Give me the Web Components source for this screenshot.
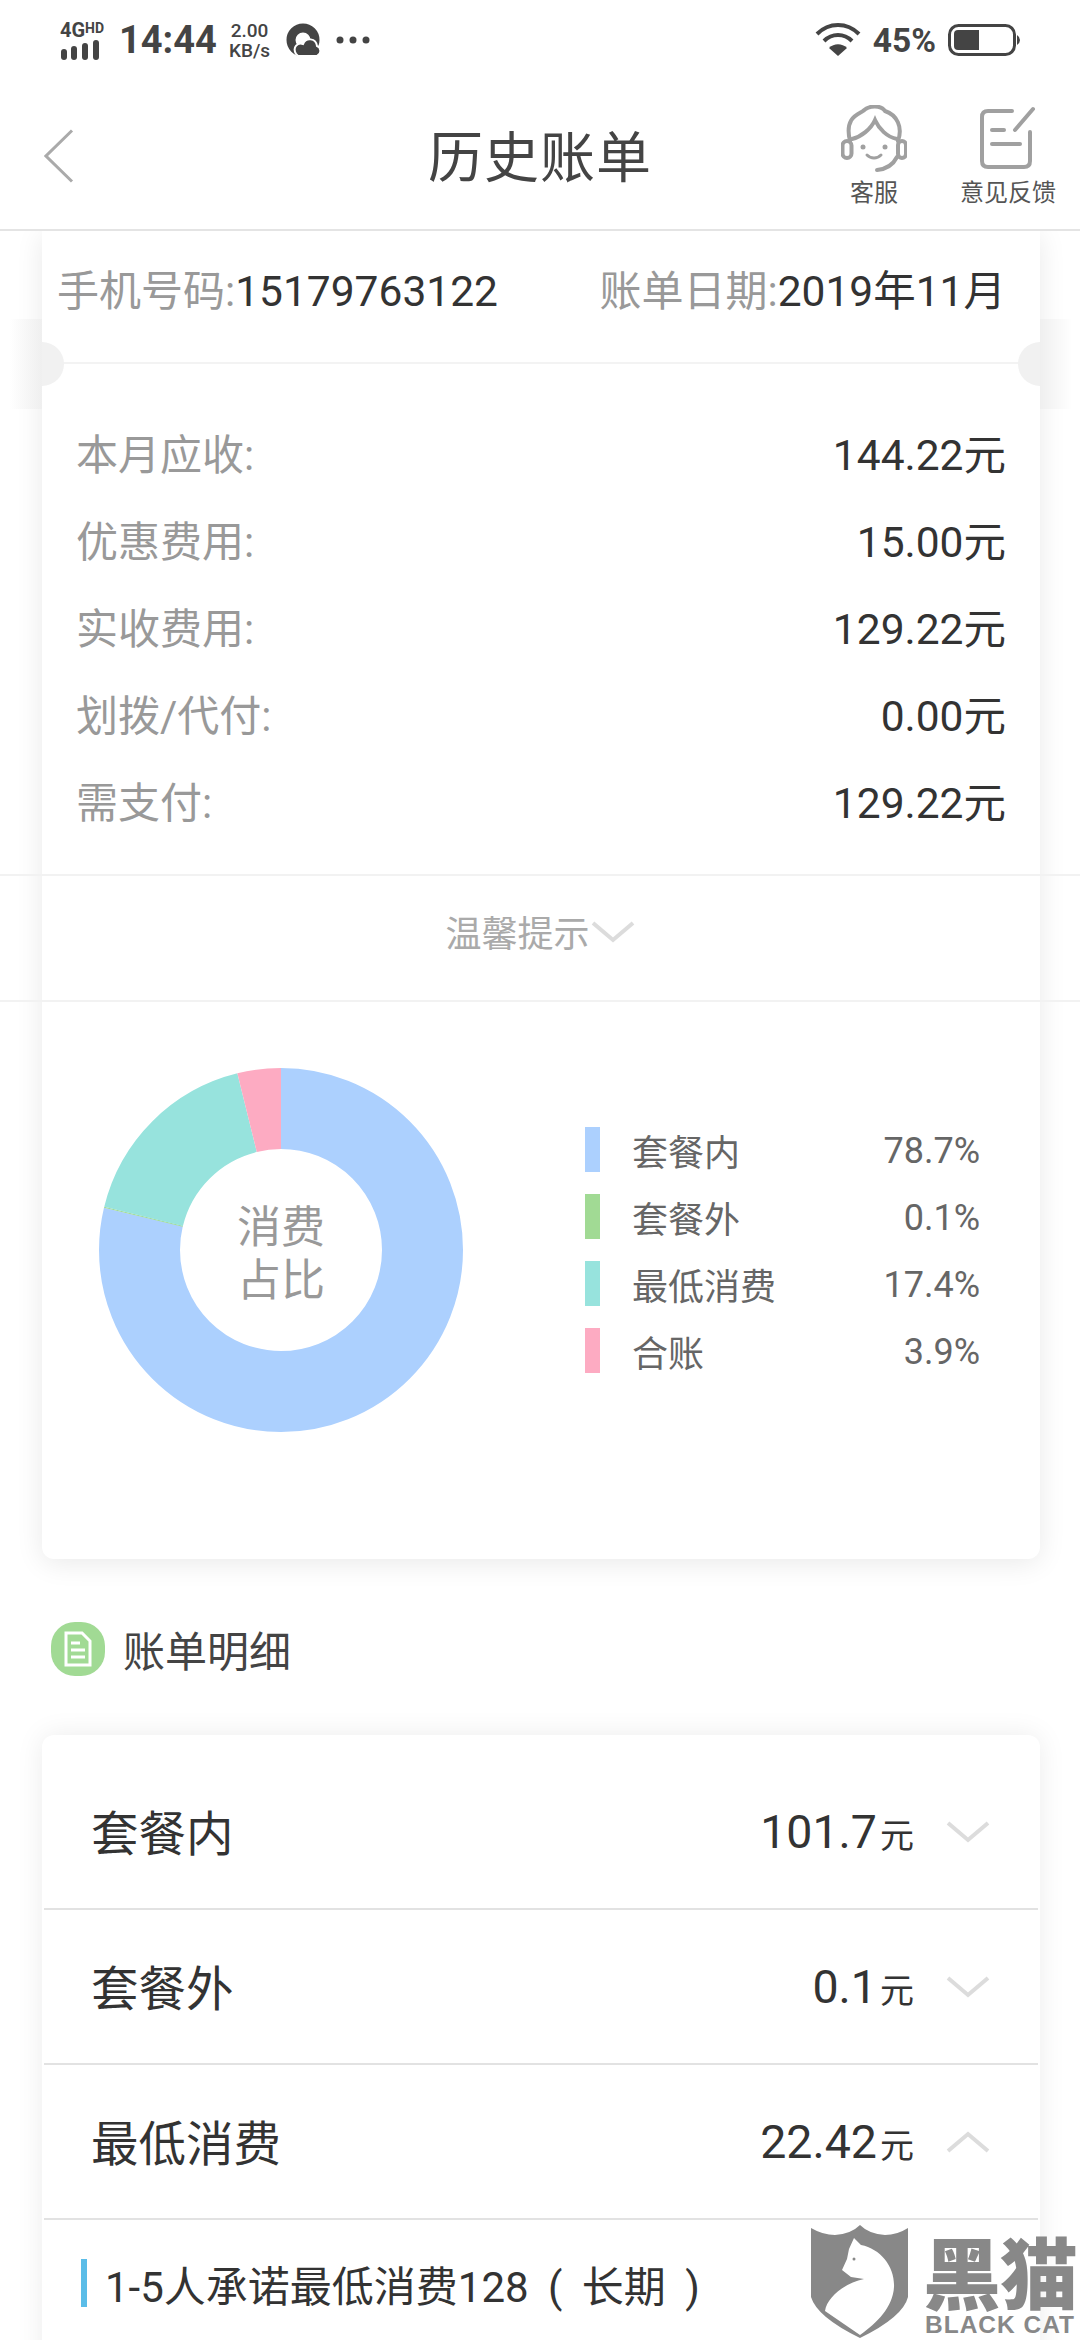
<!DOCTYPE html>
<html lang="zh">
<head>
<meta charset="utf-8">
<title>历史账单</title>
<style>
  html, body { margin: 0; background: #fff; }
  body {
    width: 1080px;
    height: 2340px;
    overflow: hidden;
    position: relative;
    font-family: Roboto, "Noto Sans CJK SC", sans-serif;
  }
</style>
</head>
<body>
<status-bar></status-bar>
<nav-bar heading="历史账单"></nav-bar>

<bill-summary phone="15179763122" date="2019年11月">
  <fee-row label="本月应收:" value="144.22元"></fee-row>
  <fee-row label="优惠费用:" value="15.00元"></fee-row>
  <fee-row label="实收费用:" value="129.22元"></fee-row>
  <fee-row label="划拨/代付:" value="0.00元"></fee-row>
  <fee-row label="需支付:" value="129.22元"></fee-row>
  <donut-chart slot="chart">
    <legend-item color="#acd0fe" label="套餐内" value="78.7%"></legend-item>
    <legend-item color="#a1da94" label="套餐外" value="0.1%"></legend-item>
    <legend-item color="#97e3dd" label="最低消费" value="17.4%"></legend-item>
    <legend-item color="#fdabc2" label="合账" value="3.9%"></legend-item>
  </donut-chart>
</bill-summary>

<section-title>账单明细</section-title>

<detail-card>
  <bill-row label="套餐内" amount="101.7"></bill-row>
  <bill-row label="套餐外" amount="0.1"></bill-row>
  <bill-row label="最低消费" amount="22.42" open></bill-row>
  <detail-line>1-5人承诺最低消费128 ( 长期 )</detail-line>
</detail-card>

<black-cat></black-cat>

<script>
const chevron = (up) => `
  <svg width="44" height="24" viewBox="0 0 44 24" fill="none">
    <path d="${up ? "M2 21 L22 4 L42 21" : "M2 3 L22 20 L42 3"}" stroke="#dcdcdc" stroke-width="4"/>
  </svg>`;

class StatusBar extends HTMLElement {
  constructor() {
    super();
    this.attachShadow({ mode: "open" }).innerHTML = `
      <style>
        :host { display: flex; align-items: center; height: 80px; box-sizing: border-box; padding: 0 60px; color: #444; }
        .net { width: 46px; margin-right: 13px; margin-top: 1px; }
        .net .g { display: block; font: 700 20px/16px Roboto, sans-serif; white-space: nowrap; margin-bottom: 1px; }
        .net sup { font-size: 14px; line-height: 0; vertical-align: 4px; }
        .time { font: 700 38px/1 Roboto, sans-serif; }
        .speed { font: 500 19px/20px Roboto, sans-serif; text-align: center; margin: 2px 0 0 12px; }
        .cloud { margin-left: 16px; }
        .dots { margin-left: 15px; }
        .right { margin-left: auto; display: flex; align-items: center; }
        .pct { font: 700 33.5px/1 Roboto, sans-serif; margin: 2px 12px 0 12px; }
      </style>
      <div class="net">
        <span class="g">4G<sup>HD</sup></span>
        <svg width="46" height="21" viewBox="0 0 46 21" fill="#444" style="display:block">
          <rect x="1" y="10" width="6" height="11" rx="3"/>
          <rect x="11" y="7" width="6" height="14" rx="3"/>
          <rect x="22" y="4" width="6" height="17" rx="3"/>
          <rect x="33" y="1" width="6" height="20" rx="3"/>
        </svg>
      </div>
      <div class="time">14:44</div>
      <div class="speed">2.00<br>KB/s</div>
      <svg class="cloud" width="35" height="34" viewBox="0 0 35 34">
        <circle cx="17" cy="17" r="12" fill="none" stroke="#444" stroke-width="9"/>
        <path d="M10 31 C6 24 12 19 17 21 C20 14 30 15 31 23 C35 24 36 31 31 33 L12 33 Z" fill="#444" stroke="#fff" stroke-width="2"/>
      </svg>
      <svg class="dots" width="34" height="8" viewBox="0 0 34 8" fill="#444">
        <circle cx="4" cy="4" r="3.5"/><circle cx="17" cy="4" r="3.5"/><circle cx="30" cy="4" r="3.5"/>
      </svg>
      <div class="right">
        <svg width="46" height="34" viewBox="0 0 46 34" fill="none" stroke="#444" stroke-width="4">
          <path d="M2 11 C14 -1 32 -1 44 11"/>
          <path d="M9 18 C17 10 29 10 37 18"/>
          <path d="M23 33 L14 25 C19 20 27 20 32 25 Z" fill="#444" stroke="none"/>
        </svg>
        <span class="pct">45%</span>
        <svg width="72" height="32" viewBox="0 0 72 32" fill="none">
          <rect x="1.5" y="1.5" width="65" height="29" rx="9" stroke="#444" stroke-width="3"/>
          <path d="M10 6 H31 V26 H10 Q6 26 6 22 V10 Q6 6 10 6 Z" fill="#444"/>
          <path d="M69 11 Q72 13 72 16 Q72 19 69 21 Z" fill="#444"/>
        </svg>
      </div>`;
  }
}

class NavBar extends HTMLElement {
  constructor() {
    super();
    const heading = this.getAttribute("heading") || "";
    this.attachShadow({ mode: "open" }).innerHTML = `
      <style>
        :host { display: grid; grid-template-columns: minmax(0, 1fr) auto minmax(0, 1fr); align-items: center; height: 151px; box-sizing: border-box; border-bottom: 2px solid #e4e4e4; color: #444; background: #fff; position: relative; z-index: 2; }
        h1 { margin: 8px 0 0; font-size: 55px; font-weight: 400; line-height: 1; letter-spacing: 1px; }
        .back { margin: 2px 0 0 44px; display: block; }
        .acts { display: flex; justify-self: end; }
        .act { display: flex; flex-direction: column; align-items: center; font-size: 24px; line-height: 28px; color: #555; }
        .act svg { display: block; margin: 2px 0 6px; }
        .a1 { width: 94px; margin-right: 37px; }
        .a2 { width: 100px; margin-right: 22px; }
      </style>
      <svg class="back" width="30" height="54" viewBox="0 0 30 54" fill="none">
        <path d="M28 1.5 L2 27 L28 52.5" stroke="#aaa" stroke-width="3"/>
      </svg>
      <h1>${heading}</h1>
      <div class="acts">
        <div class="act a1">
          <svg width="66" height="68" viewBox="0 0 66 68" fill="none" stroke="#a0a0a0" stroke-width="4" stroke-linecap="round">
            <path d="M9 36 C3 12 18 9 22 6 C28 0 40 0 44 6 C56 10 62 22 57 36"/>
            <path d="M11 34 C20 32 30 24 34 15 C38 24 46 32 56 34"/>
            <rect x="1.5" y="36" width="9" height="17" rx="4.5"/>
            <rect x="57" y="36" width="8" height="17" rx="4"/>
            <path d="M56 52 C52 60 46 64 36 65"/>
            <path d="M26 50 C30 54 36 54 40 50" stroke-width="3"/>
            <circle cx="22" cy="42" r="2.5" fill="#a0a0a0" stroke="none"/>
            <circle cx="44" cy="42" r="2.5" fill="#a0a0a0" stroke="none"/>
          </svg>
          客服
        </div>
        <div class="act a2">
          <svg width="56" height="68" viewBox="0 0 56 62" fill="none" stroke="#a0a0a0" stroke-width="4" stroke-linecap="round">
            <path d="M32 3 H8 Q2 3 2 9 V53 Q2 59 8 59 H44 Q50 59 50 53 V24"/>
            <path d="M35 22 L53 1"/>
            <path d="M12 22 H24"/>
            <path d="M12 36 H40"/>
          </svg>
          意见反馈
        </div>
      </div>`;
  }
}

class FeeRow extends HTMLElement {
  constructor() {
    super();
    this.attachShadow({ mode: "open" }).innerHTML = `
      <style>
        :host { display: flex; justify-content: space-between; align-items: center; height: 87px; }
        .l { font-size: 42px; color: #999; }
        .v { font-size: 42.5px; color: #333; }
      </style>
      <span class="l">${this.getAttribute("label")}</span>
      <span class="v">${this.getAttribute("value")}</span>`;
  }
}

class BillSummary extends HTMLElement {
  constructor() {
    super();
    const phone = this.getAttribute("phone");
    const date = this.getAttribute("date");
    this.attachShadow({ mode: "open" }).innerHTML = `
      <style>
        :host { display: block; margin: 0 40px 0 42px; background: #fff; border-radius: 0 0 12px 12px; box-shadow: 0 4px 28px rgba(0,0,0,.09); position: relative; }
        .head { display: flex; justify-content: space-between; align-items: flex-start; height: 133px; box-sizing: border-box; padding: 34px 34px 0 15px; border-bottom: 2px solid #f3f3f3; font-size: 42px; color: #999; line-height: 54px; }
        .head b { font-weight: 400; font-size: 42.5px; color: #333; }
        /* 票据两侧的缺口和背后的灰带 */
        .band { position: absolute; top: 88px; width: 32px; height: 90px; }
        .band.l { left: -32px; background: linear-gradient(to left, #efefef, #fff); }
        .band.r { right: -32px; background: linear-gradient(to right, #efefef, #fff); }
        .notch { position: absolute; top: 111px; width: 22px; height: 44px; background: #f1f1f1; }
        .notch.l { left: 0; border-radius: 0 22px 22px 0; }
        .notch.r { right: 0; border-radius: 22px 0 0 22px; }
        .rows { padding: 44px 34px 31px; }
        .tip { position: relative; display: flex; justify-content: center; align-items: center; height: 128px; box-sizing: border-box; border-top: 2px solid #efefef; border-bottom: 2px solid #efefef; font-size: 36px; color: #aaa; padding: 0 2px 15px 0; }
        .tip::before, .tip::after { content: ""; position: absolute; left: -42px; right: -40px; height: 2px; background: #f2f2f2; }
        .tip::before { top: -2px; }
        .tip::after { bottom: -2px; }
        .tip svg { margin: 2px 0 0 1px; }
      </style>
      <div class="head">
        <span>手机号码:<b>${phone}</b></span>
        <span>账单日期:<b>${date}</b></span>
      </div>
      <i class="band l"></i><i class="band r"></i>
      <i class="notch l"></i><i class="notch r"></i>
      <div class="rows"><slot></slot></div>
      <div class="tip">温馨提示${chevron(false)}</div>
      <slot name="chart"></slot>`;
  }
}

class DonutChart extends HTMLElement {
  constructor() {
    super();
    // 中线半径 141.5，圆环宽 81
    const c = 2 * Math.PI * 141.5;
    const arc = (color, from, to) =>
      `<circle cx="182" cy="182" r="141.5" fill="none" stroke="${color}" stroke-width="81"
        stroke-dasharray="${(to - from) * c} ${c}" stroke-dashoffset="${-from * c}"/>`;
    this.attachShadow({ mode: "open" }).innerHTML = `
      <style>
        :host { display: flex; align-items: center; height: 557px; box-sizing: border-box; padding: 66px 60px 127px 57px; }
        .ring { position: relative; width: 364px; height: 364px; flex: none; }
        svg { display: block; transform: rotate(-90deg); }
        .mid { position: absolute; top: 10px; left: 0; right: 0; bottom: 0; display: flex; align-items: center; justify-content: center; text-align: center; font-size: 44px; line-height: 53px; color: #999; }
        .legend { flex: 1; margin-left: 122px; display: flex; flex-direction: column; }
      </style>
      <div class="ring">
        <svg width="364" height="364" viewBox="0 0 364 364">
          ${arc("#acd0fe", 0, 0.787)}
          ${arc("#a1da94", 0.787, 0.788)}
          ${arc("#97e3dd", 0.788, 0.961)}
          ${arc("#fdabc2", 0.961, 1)}
        </svg>
        <div class="mid">消费<br>占比</div>
      </div>
      <div class="legend"><slot></slot></div>`;
  }
}

class LegendItem extends HTMLElement {
  constructor() {
    super();
    this.attachShadow({ mode: "open" }).innerHTML = `
      <style>
        :host { display: flex; align-items: center; height: 45px; color: #666; margin-bottom: 22px; }
        :host(:last-child) { margin-bottom: 0; }
        i { width: 15px; height: 45px; background: ${this.getAttribute("color")}; margin-right: 32px; }
        .l { font-size: 36px; }
        .v { font-size: 36px; margin: 3px 0 0 auto; }
      </style>
      <i></i>
      <span class="l">${this.getAttribute("label")}</span>
      <span class="v">${this.getAttribute("value")}</span>`;
  }
}

class SectionTitle extends HTMLElement {
  constructor() {
    super();
    this.attachShadow({ mode: "open" }).innerHTML = `
      <style>
        :host { display: flex; align-items: center; height: 176px; box-sizing: border-box; padding: 3px 0 0 51px; font-size: 42px; color: #444; }
        svg { margin-right: 18px; }
      </style>
      <svg width="54" height="54" viewBox="0 0 54 54">
        <rect width="54" height="54" rx="24" fill="#a1da94"/>
        <path d="M15 11 H31 L39 19 V43 H15 Z" fill="none" stroke="#fff" stroke-width="3"/>
        <path d="M20 21 H29 M20 28 H34 M20 35 H34" stroke="#fff" stroke-width="3"/>
      </svg>
      <slot></slot>`;
  }
}

class DetailCard extends HTMLElement {
  constructor() {
    super();
    this.attachShadow({ mode: "open" }).innerHTML = `
      <style>
        :host { display: block; margin: 0 40px 0 42px; padding: 20px 2px 0; background: #fff; border-radius: 12px 12px 0 0; box-shadow: 0 0 28px rgba(0,0,0,.08); height: 640px; box-sizing: border-box; }
      </style>
      <slot></slot>`;
  }
}

class BillRow extends HTMLElement {
  constructor() {
    super();
    const open = this.hasAttribute("open");
    this.attachShadow({ mode: "open" }).innerHTML = `
      <style>
        :host { display: flex; align-items: center; height: 155px; box-sizing: border-box; border-bottom: 2px solid #e2e2e2; padding: 0 48px 0 47px; color: #333; }
        .l { font-size: 47.5px; margin-top: -2px; }
        .a { margin-left: auto; font-size: 46.5px; }
        .a small { font-size: 34px; margin-left: 3px; }
        svg { margin-left: 32px; }
      </style>
      <span class="l">${this.getAttribute("label")}</span>
      <span class="a">${this.getAttribute("amount")}<small>元</small></span>
      ${chevron(open)}`;
  }
}

class DetailLine extends HTMLElement {
  constructor() {
    super();
    this.attachShadow({ mode: "open" }).innerHTML = `
      <style>
        :host { display: flex; align-items: center; margin: 39px 0 0 37px; height: 48px; font-size: 42px; color: #333; white-space: pre; word-spacing: 9px; }
        i { width: 6px; height: 48px; background: #5bbde8; margin-right: 18px; flex: none; }
      </style>
      <i></i><span><slot></slot></span>`;
  }
}

class BlackCat extends HTMLElement {
  constructor() {
    super();
    this.attachShadow({ mode: "open" }).innerHTML = `
      <style>
        :host { position: absolute; left: 811px; top: 2225px; width: 269px; height: 115px; color: #888; }
        svg { position: absolute; left: 0; top: 0; }
        .cn { position: absolute; left: 112px; top: 6px; font: 900 78px/78px "Noto Sans CJK SC", sans-serif; white-space: nowrap; letter-spacing: -1px; }
        .en { position: absolute; left: 114px; top: 88px; font: 700 24.5px/24px "Liberation Sans", sans-serif; white-space: nowrap; letter-spacing: 1px; }
      </style>
      <svg width="97" height="114" viewBox="0 0 97 114">
        <path d="M0 3 Q12 10 24 10 Q40 9 49 0 Q58 9 74 10 Q86 10 97 3 V72 Q92 92 49 113 Q6 92 0 72 Z" fill="#888"/>
        <path d="M43 13 L50 20 C70 24 84 42 83 62 C82 82 66 98 49 110 L14 86 C16 72 34 58 53 54 L40 52 L31 45 L36 34 L38 24 Z" fill="#fff"/>
        <circle cx="43" cy="34" r="1.5" fill="#888"/>
      </svg>
      <span class="cn">黑猫</span>
      <span class="en">BLACK CAT</span>`;
  }
}

customElements.define("status-bar", StatusBar);
customElements.define("nav-bar", NavBar);
customElements.define("fee-row", FeeRow);
customElements.define("bill-summary", BillSummary);
customElements.define("donut-chart", DonutChart);
customElements.define("legend-item", LegendItem);
customElements.define("section-title", SectionTitle);
customElements.define("detail-card", DetailCard);
customElements.define("bill-row", BillRow);
customElements.define("detail-line", DetailLine);
customElements.define("black-cat", BlackCat);
</script>
</body>
</html>
